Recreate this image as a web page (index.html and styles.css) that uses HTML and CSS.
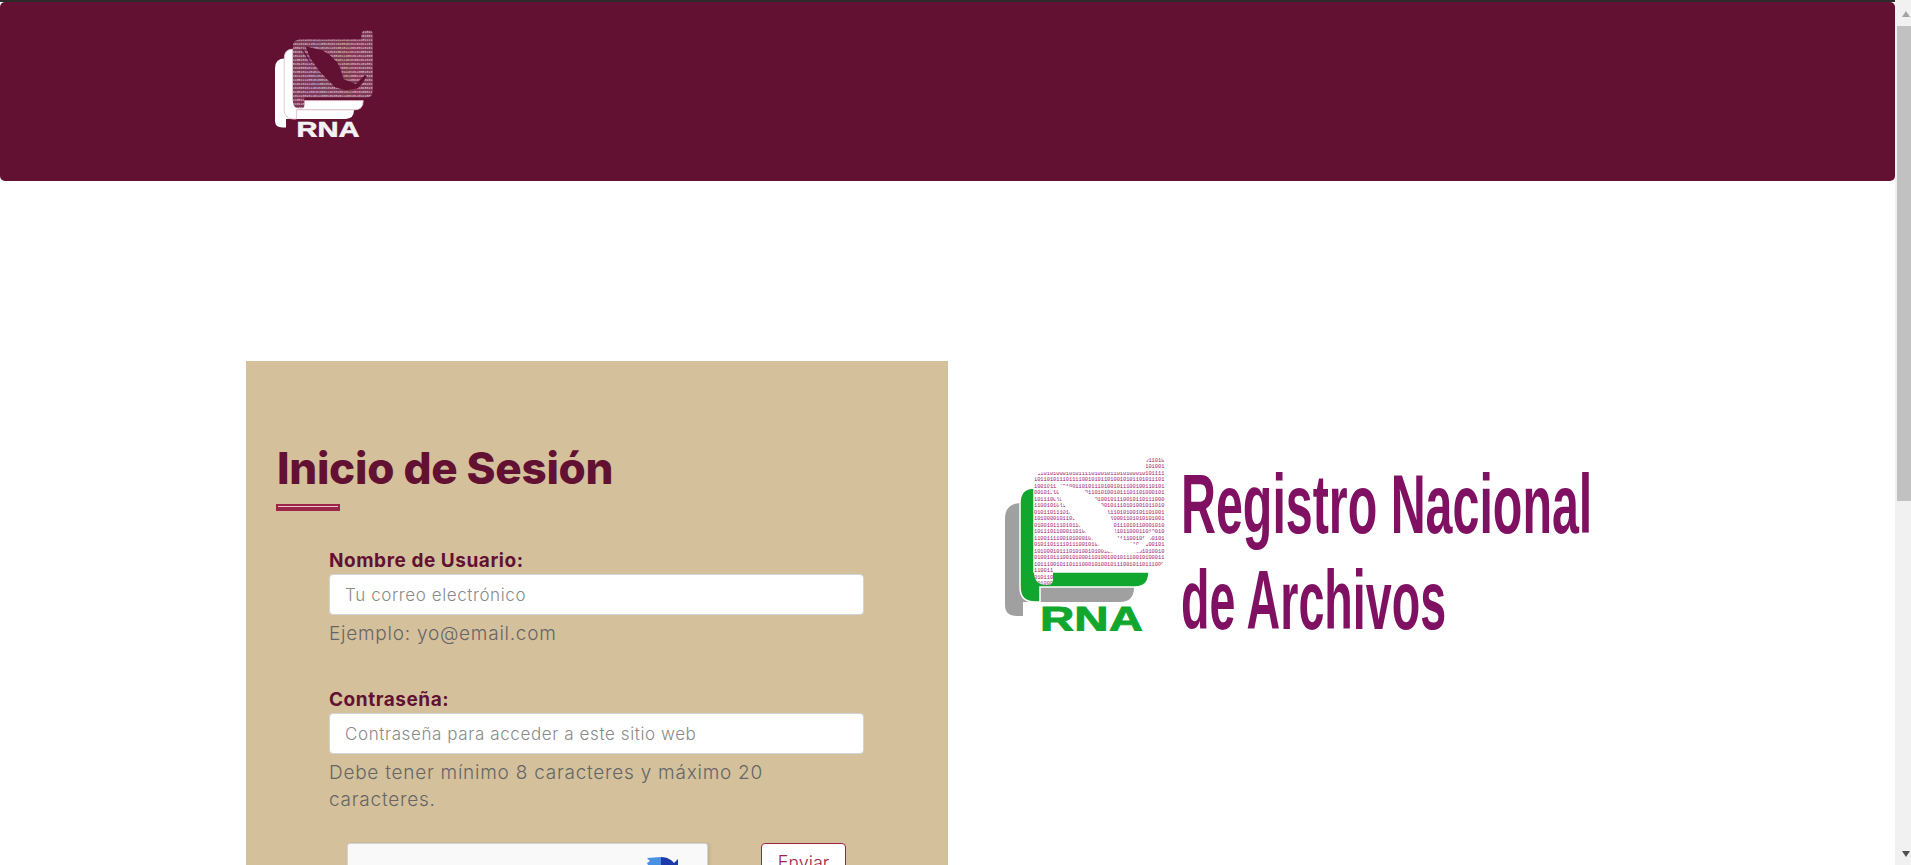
FILE: index.html
```html
<!DOCTYPE html>
<html lang="es">
<head>
<meta charset="utf-8">
<title>Registro Nacional de Archivos</title>
<link rel="stylesheet" href="styles.css">
</head>
<body>
<svg class="defs" width="0" height="0" aria-hidden="true">
  <defs>
    <clipPath id="field-clip">
      <path d="M41 15H141V8Q141 0 149 0H152Q160 0 160 8V98Q160 110 148 110H48V122Q48 128 42 128Q29 128 29 115V27Q29 15 41 15Z"/>
    </clipPath>
    <symbol id="rna-mark" viewBox="0 0 160 174">
      <path class="mark-back" d="M16 46Q0 46 0 62V148Q0 159 12 159H18V145H115Q129 145 129 130H18V46Z"/>
      <path class="mark-mid" d="M29 31Q15 31 15 46V130Q15 145 30 145H35V130H130Q144 130 144 115H29V31Z"/>
      <g clip-path="url(#field-clip)">
        <rect class="mark-field" x="29" y="0" width="131" height="128"/>
        <text class="mark-bits">
          <tspan x="29" y="5">11001010111010010110100101110101001011010</tspan>
          <tspan x="29" y="11">01011011101001011010010111010100101101001</tspan>
          <tspan x="29" y="18">11101010001010111101001011010100010101111</tspan>
          <tspan x="29" y="24">10110101110111100101011010010101101011101</tspan>
          <tspan x="29" y="31">10010111001001101011101001011100100110101</tspan>
          <tspan x="29" y="37">00101110110100010110101001011101101000101</tspan>
          <tspan x="29" y="44">10111001011011100010100101110010110111000</tspan>
          <tspan x="29" y="50">11001010111010010110100101110101001011010</tspan>
          <tspan x="29" y="57">01011011101001011010010111010100101101001</tspan>
          <tspan x="29" y="63">10100001011010001011010110001101010101001</tspan>
          <tspan x="29" y="70">01001011101011000101010010111010110001010</tspan>
          <tspan x="29" y="76">10111011000110100101101001101100011010010</tspan>
          <tspan x="29" y="83">11001111001010001011101010111100101000101</tspan>
          <tspan x="29" y="89">01011011110111001010100101101111011100101</tspan>
          <tspan x="29" y="96">10100010111010100101001010001011101010010</tspan>
          <tspan x="29" y="102">01001011100101000110100100101110010100011</tspan>
          <tspan x="29" y="109">10111001011011100010100101110010110111000</tspan>
          <tspan x="29" y="115">11001111001010001011101010111100101000101</tspan>
          <tspan x="29" y="122">01011011101001011010010111010100101101001</tspan>
          <tspan x="29" y="128">10100001011010001011010110001101010101001</tspan>
        </text>
        <path class="mark-map" d="M50 26L78 33L90 41L102 53L107 63L112 80L132 88L147 73L150 75L143 86L135 95L115 98L98 93L85 80L72 66L57 45Z"/>
        <path class="mark-map" d="M43 27L52 41L60 57L54 49L46 35Z"/>
      </g>
      <text class="mark-name" x="35" y="174" textLength="103" lengthAdjust="spacingAndGlyphs">RNA</text>
    </symbol>
  </defs>
</svg>
<div class="shell">
  <div class="page">
    <div class="topline"></div>
    <header class="banner">
      <svg class="banner-logo" width="98" height="107" role="img" aria-label="RNA"><use href="#rna-mark"/></svg>
    </header>
    <main class="main">
      <section class="panel">
        <h1 class="panel-title">Inicio de Sesión</h1>
        <div class="rule"></div>
        <form class="form">
          <div class="field">
            <label class="label" for="user">Nombre de Usuario:</label>
            <input class="input" id="user" type="text" placeholder="Tu correo electrónico">
            <p class="help">Ejemplo: yo@email.com</p>
          </div>
          <div class="field field-last">
            <label class="label" for="pass">Contraseña:</label>
            <input class="input" id="pass" type="password" placeholder="Contraseña para acceder a este sitio web">
            <p class="help">Debe tener mínimo 8 caracteres y máximo 20 caracteres.</p>
          </div>
          <div class="actions">
            <div class="captcha">
              <svg class="captcha-icon" width="31" height="30" viewBox="0 0 31 30" aria-hidden="true">
                <path class="cap-light" d="M0 1L14 0V14H4L0 6L3 4Z"/>
                <path class="cap-dark" d="M14 0C20 0 25 3 27 6L31 2V14H14Z"/>
              </svg>
            </div>
            <button class="send" type="button">Enviar</button>
          </div>
        </form>
      </section>
      <aside class="brand">
        <svg class="brand-logo" width="160" height="174" role="img" aria-label="RNA"><use href="#rna-mark"/></svg>
        <svg class="brand-name" width="412" height="190" viewBox="0 0 412 190" role="img" aria-label="Registro Nacional de Archivos">
          <text class="brand-text" transform="translate(0 76) scale(.576 1)">Registro Nacional</text>
          <text class="brand-text" transform="translate(0 172) scale(.555 1)">de Archivos</text>
        </svg>
      </aside>
    </main>
  </div>
  <div class="scrollbar" aria-hidden="true">
    <span class="arrow-up"></span>
    <span class="thumb"></span>
    <span class="arrow-down"></span>
  </div>
</div>
</body>
</html>
```

FILE: styles.css
```css
* { box-sizing: border-box; }
html, body { margin: 0; height: 865px; overflow: hidden; background: #fff; }
body { font-family: Inter, "Noto Sans", sans-serif; }
.defs { display: block; height: 0; }

.shell { display: flex; height: 865px; overflow: hidden; }
.page { flex: 1; min-width: 0; }

.topline { height: 2px; background: #2b2b2b; }
.banner {
  height: 179px;
  background: #621132;
  border-radius: 5px;
  padding: 28px 0 0 275px;
  --mark-back: #fff;
  --mark-mid: #fff;
  --mark-line: #e0c3d0;
  --mark-field: #7c3a55;
  --mark-bits: #f3dfe6;
  --mark-map: #621132;
  --mark-name: #f2f2f2;
}
.banner-logo { display: block; }

.mark-back { fill: var(--mark-back); }
.mark-mid { fill: var(--mark-mid); stroke: var(--mark-line); stroke-width: 1.5; }
.mark-field { fill: var(--mark-field); }
.mark-bits { fill: var(--mark-bits); font: 400 5.3px "Liberation Mono", monospace; }
.mark-map { fill: var(--mark-map); }
.mark-name {
  fill: var(--mark-name);
  stroke: var(--mark-name);
  stroke-width: .9;
  font: 700 35px "Liberation Sans", sans-serif;
}

.main {
  display: grid;
  grid-template-columns: 702px 1fr;
  margin-top: 180px;
  padding-left: 246px;
}
.panel {
  background: #d4c19c;
  padding: 82px 84px 120px 31px;
  height: 760px;
}
.panel-title {
  margin: 0;
  font-size: 44px;
  line-height: 50px;
  font-weight: 800;
  color: #621132;
  letter-spacing: -0.3px;
}
.rule {
  width: 64px;
  height: 7px;
  margin: 11px 0 0 -1px;
  background: #9d2449;
  border: 2px solid #9d2449;
  border-width: 2px 2px 3px;
}
.rule::after {
  content: "";
  display: block;
  height: 1px;
  background: #e8c9c9;
}
.form { margin: 38px 0 0 52px; }
.field { margin-bottom: 41px; }
.field-last { margin-bottom: 30px; }
.label {
  display: block;
  font-size: 19px;
  line-height: 24px;
  font-weight: 700;
  color: #621132;
  letter-spacing: 0.55px;
}
.input {
  display: block;
  width: 100%;
  height: 41px;
  margin-top: 1px;
  padding: 0 15px;
  border: 1px solid #ced4da;
  border-radius: 4px;
  background: #fff;
  font: 300 17px Inter, "Noto Sans", sans-serif;
  color: #495057;
  outline: none;
}
.input::placeholder { color: #8a8a8a; opacity: 1; letter-spacing: 0.6px; }
.help {
  margin: 5px 0 0;
  font-size: 19px;
  line-height: 27px;
  font-weight: 300;
  color: #666;
  letter-spacing: 0.75px;
}
.actions {
  display: flex;
  justify-content: space-between;
  padding: 0 18px 0 18px;
}
.captcha {
  width: 361px;
  height: 78px;
  background: #f9f9f9;
  border: 1px solid #d3d3d3;
  border-radius: 3px;
  box-shadow: 2px 0 3px rgba(0, 0, 0, .08);
  padding: 13px 0 0 299px;
}
.captcha-icon { display: block; }
.cap-light { fill: #4a90e2; }
.cap-dark { fill: #1c3aa9; }
.send {
  width: 85px;
  height: 42px;
  border: 1.5px solid #9d2449;
  border-radius: 4px;
  background: #fff;
  color: #9d2449;
  font: 300 18px Inter, "Noto Sans", sans-serif;
  padding: 0 0 4px;
}

.brand { display: flex; gap: 16px; padding: 96px 0 0 57px; align-items: flex-start; }
.brand { --mark-back: #a0a0a0; --mark-mid: #11a72f; --mark-line: #fff; --mark-field: #fff; --mark-bits: #a0206f; --mark-map: #fff; --mark-name: #11a72f; }
.brand-logo, .brand-name { display: block; flex: none; }
.brand-text { fill: #7f1062; font: 700 84px "Liberation Sans", sans-serif; }

.scrollbar {
  flex: none;
  width: 16px;
  height: 865px;
  background: #f1f1f1;
  display: flex;
  flex-direction: column;
  padding-left: 2px;
}
.arrow-up, .arrow-down {
  flex: none;
  width: 0;
  height: 0;
  margin-left: 5px;
  border-left: 4.5px solid transparent;
  border-right: 4.5px solid transparent;
}
.arrow-up { margin-top: 11px; border-bottom: 6px solid #a3a3a3; }
.thumb { flex: none; display: block; width: 14px; height: 475px; margin-top: 9px; background: #c1c1c1; }
.arrow-down { margin-top: 350px; border-top: 6px solid #505050; }
```
